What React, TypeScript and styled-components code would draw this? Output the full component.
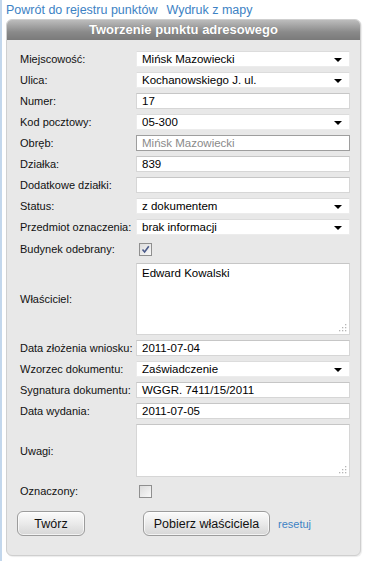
import React from "react";
import styled, { createGlobalStyle } from "styled-components";

const Global = createGlobalStyle`
  html, body { margin: 0; padding: 0; background: #ffffff; }
  body {
    font-family: "Liberation Sans", Arial, sans-serif;
    border-left: 2px solid #c3d7ec;
    min-height: 561px;
    box-sizing: border-box;
  }
`;

const Page = styled.div`
  padding: 2px 5px 0 4px;
`;

const TopLinks = styled.div`
  display: flex;
  gap: 9px;
  height: 16px;
  line-height: 16px;
  margin-bottom: 1px;
`;

const TopLink = styled.a`
  font-size: 12.5px;
  color: #3d82c4;
  text-decoration: none;
`;

const Panel = styled.div`
  width: 355px;
  box-sizing: border-box;
  border: 1px solid #cfcfcf;
  border-radius: 6px;
  background: #e8e8e8;
  box-shadow: 1px 1px 1px rgba(0, 0, 0, 0.08);
  overflow: hidden;
`;

const Header = styled.div`
  height: 20px;
  line-height: 20px;
  text-align: center;
  color: #ffffff;
  font-weight: bold;
  font-size: 13px;
  background: linear-gradient(#bcbcbc, #8a8a8a 60%, #7a7a7a);
  text-shadow: 0 0 1px rgba(0, 0, 0, 0.25);
`;

const Form = styled.div`
  display: grid;
  grid-template-columns: 116px 214px;
  row-gap: 5px;
  padding: 11px 10px 19px 13px;
  align-items: center;
`;

const Label = styled.div`
  font-size: 11px;
  color: #111;
  white-space: nowrap;
`;

const Field = styled.div<{ $h?: number; $disabled?: boolean; $plain?: boolean }>`
  position: relative;
  height: ${(p) => p.$h ?? 16}px;
  box-sizing: border-box;
  background: #ffffff;
  border: 1px solid ${(p) => (p.$disabled ? "#9e9e9e" : p.$plain ? "#ececec" : "#d6d6d6")};
  border-top-color: ${(p) => (p.$disabled ? "#9e9e9e" : p.$plain ? "#dcdcdc" : "#c6c6c6")};
  font-size: 11.5px;
  color: ${(p) => (p.$disabled ? "#8a8a8a" : "#000")};
  padding: 0 5px;
  line-height: 14px;
  display: flex;
  align-items: ${(p) => (p.$h ? "flex-start" : "center")};
  padding-top: ${(p) => (p.$h ? "2px" : "0")};
`;

const SelectText = styled.span`
  flex: 1;
`;

const Arrow = styled.span`
  width: 0;
  height: 0;
  border-left: 4px solid transparent;
  border-right: 4px solid transparent;
  border-top: 4px solid #000;
  margin-right: 2px;
  margin-top: 2px;
`;

const Grip = styled.svg`
  position: absolute;
  right: 2px;
  bottom: 2px;
`;

const CheckWrap = styled.div`
  height: 18px;
  display: flex;
  align-items: center;
`;

const Check = styled.span`
  width: 13px;
  height: 13px;
  box-sizing: border-box;
  margin-left: 3px;
  border: 1px solid #8f8f8f;
  background: linear-gradient(135deg, #dcdcdc, #f8f8f8);
  display: flex;
  align-items: center;
  justify-content: center;
`;

const ButtonRow = styled.div`
  grid-column: 1 / span 2;
  display: grid;
  grid-template-columns: 126px auto auto;
  justify-content: start;
  align-items: center;
  margin-top: 6px;
  margin-left: -3px;
`;

const Button = styled.button<{ $w: number }>`
  width: ${(p) => p.$w}px;
  height: 25px;
  border: 1px solid #9c9c9c;
  border-radius: 6px;
  background: linear-gradient(#fbfbfb, #eaeaea 50%, #d6d6d6);
  font-family: "Liberation Sans", Arial, sans-serif;
  font-size: 12.5px;
  color: #111;
  padding: 0;
  box-shadow: inset 0 0 0 1px rgba(255, 255, 255, 0.7);
`;

const Reset = styled.a`
  font-size: 11px;
  color: #3d82c4;
  margin-left: 8px;
  text-decoration: none;
`;

const GripIcon = () => (
  <Grip width="8" height="8" viewBox="0 0 8 8">
    {[
      [6, 0],
      [6, 3],
      [3, 3],
      [6, 6],
      [3, 6],
      [0, 6],
    ].map(([x, y], i) => (
      <rect key={i} x={x} y={y} width="1.3" height="1.3" fill="#b5b5b5" />
    ))}
  </Grip>
);

type Row =
  | { label: string; kind: "select"; value: string }
  | { label: string; kind: "input"; value: string; disabled?: boolean }
  | { label: string; kind: "check"; checked: boolean }
  | { label: string; kind: "area"; value: string; h: number };

const rows: Row[] = [
  { label: "Miejscowość:", kind: "select", value: "Mińsk Mazowiecki" },
  { label: "Ulica:", kind: "select", value: "Kochanowskiego J. ul." },
  { label: "Numer:", kind: "input", value: "17" },
  { label: "Kod pocztowy:", kind: "select", value: "05-300" },
  { label: "Obręb:", kind: "input", value: "Mińsk Mazowiecki", disabled: true },
  { label: "Działka:", kind: "input", value: "839" },
  { label: "Dodatkowe działki:", kind: "input", value: "" },
  { label: "Status:", kind: "select", value: "z dokumentem" },
  { label: "Przedmiot oznaczenia:", kind: "select", value: "brak informacji" },
  { label: "Budynek odebrany:", kind: "check", checked: true },
  { label: "Właściciel:", kind: "area", value: "Edward Kowalski", h: 72 },
  { label: "Data złożenia wniosku:", kind: "input", value: "2011-07-04" },
  { label: "Wzorzec dokumentu:", kind: "select", value: "Zaświadczenie" },
  { label: "Sygnatura dokumentu:", kind: "input", value: "WGGR. 7411/15/2011" },
  { label: "Data wydania:", kind: "input", value: "2011-07-05" },
  { label: "Uwagi:", kind: "area", value: "", h: 53 },
  { label: "Oznaczony:", kind: "check", checked: false },
];

const renderField = (r: Row) => {
  switch (r.kind) {
    case "select":
      return (
        <Field $plain>
          <SelectText>{r.value}</SelectText>
          <Arrow />
        </Field>
      );
    case "input":
      return <Field $disabled={r.disabled}>{r.value}</Field>;
    case "check":
      return (
        <CheckWrap>
          <Check>
            {r.checked && (
              <svg width="9" height="9" viewBox="0 0 9 9">
                <path d="M1.5 4.5 L3.6 7 L7.8 1.3" fill="none" stroke="#4a5a8a" strokeWidth="1.6" />
              </svg>
            )}
          </Check>
        </CheckWrap>
      );
    case "area":
      return (
        <Field $h={r.h}>
          {r.value}
          <GripIcon />
        </Field>
      );
  }
};

export default function App() {
  return (
    <>
      <Global />
      <Page>
        <TopLinks>
          <TopLink href="#">Powrót do rejestru punktów</TopLink>
          <TopLink href="#">Wydruk z mapy</TopLink>
        </TopLinks>
        <Panel>
          <Header>Tworzenie punktu adresowego</Header>
          <Form>
            {rows.map((r) => (
              <React.Fragment key={r.label}>
                <Label>{r.label}</Label>
                {renderField(r)}
              </React.Fragment>
            ))}
            <ButtonRow>
              <Button $w={68}>Twórz</Button>
              <Button $w={127}>Pobierz właściciela</Button>
              <Reset href="#">resetuj</Reset>
            </ButtonRow>
          </Form>
        </Panel>
      </Page>
    </>
  );
}
